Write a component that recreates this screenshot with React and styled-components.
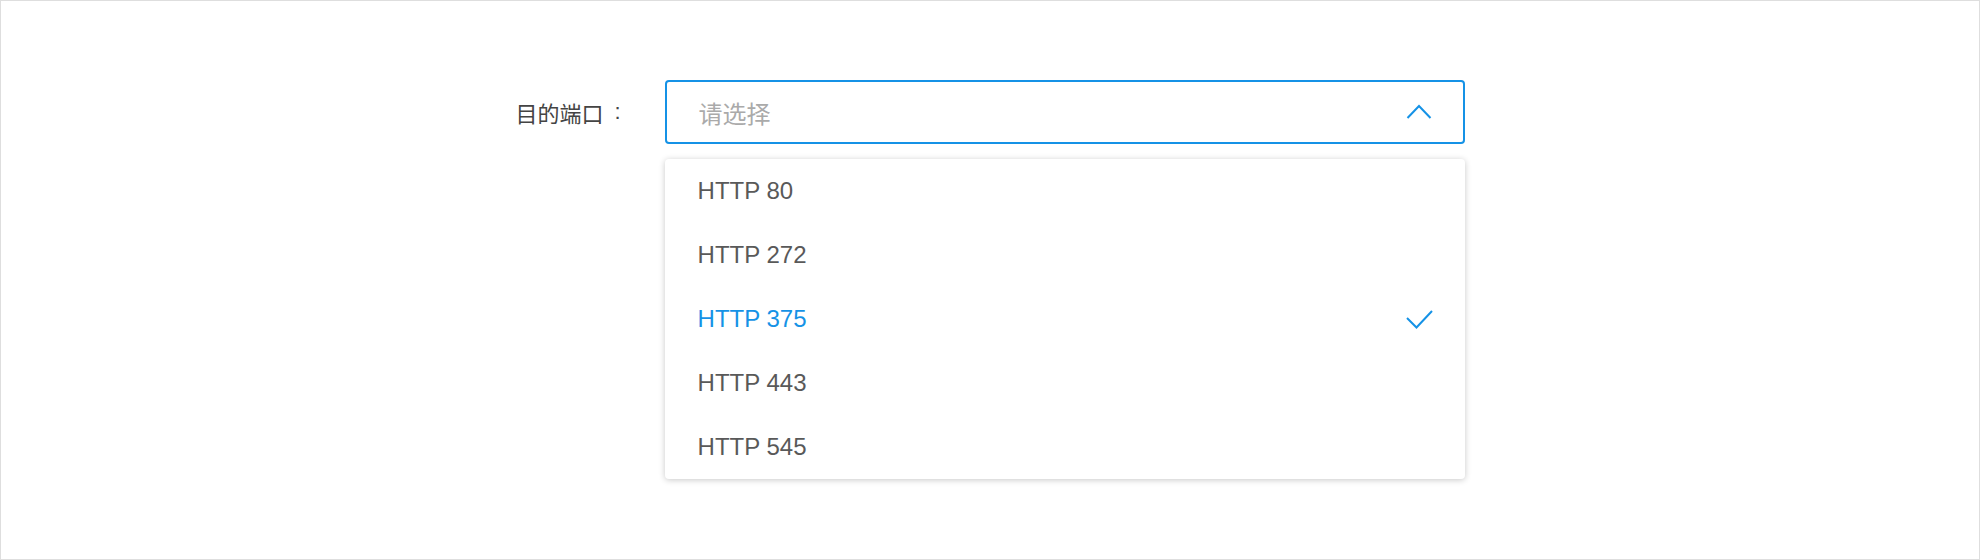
import React from "react";
import styled, { createGlobalStyle } from "styled-components";

const Global = createGlobalStyle`
  html, body { margin: 0; padding: 0; background: #fff; }
  body { font-family: "Liberation Sans", "Noto Sans CJK SC", sans-serif; }
  * { box-sizing: border-box; }
`;

const Frame = styled.div`
  width: 1980px;
  height: 560px;
  border: 1px solid #dedede;
  display: flex;
  justify-content: center;
  padding-top: 79px;
`;

const Row = styled.div`
  display: flex;
  align-items: center;
  gap: 44px;
  height: 64px;
`;

const Label = styled.label`
  display: flex;
  align-items: center;
  font-family: "Noto Sans CJK SC", sans-serif;
  font-size: 22px;
  color: #444;
  white-space: nowrap;
`;

const Colon = styled.span`
  font-family: "Liberation Sans", sans-serif;
  margin-left: 11px;
`;

const SelectWrap = styled.div`
  position: relative;
  width: 800px;
`;

const Trigger = styled.div`
  height: 64px;
  border: 2px solid #1592e6;
  border-radius: 4px;
  display: flex;
  align-items: center;
  justify-content: space-between;
  padding: 0 31px 0 32px;
`;

const Placeholder = styled.span`
  font-family: "Noto Sans CJK SC", sans-serif;
  font-size: 24px;
  color: #aaa;
`;

const Menu = styled.ul`
  position: absolute;
  top: 79px;
  left: 0;
  width: 800px;
  margin: 0;
  padding: 0;
  list-style: none;
  background: #fff;
  border-radius: 4px;
  box-shadow: 0 1px 6px rgba(0, 0, 0, 0.22);
`;

const Item = styled.li`
  height: 64px;
  display: flex;
  align-items: center;
  justify-content: space-between;
  padding: 0 32px 0 33px;
  font-size: 24px;
  color: ${(p) => (p.$active ? "#1592e6" : "#595959")};
`;

const Chevron = () => (
  <svg width="26" height="16" viewBox="0 0 26 16">
    <polyline points="1.5,14 13,2 24.5,14" fill="none" stroke="#1592e6" strokeWidth="2" />
  </svg>
);

const Check = () => (
  <svg width="27" height="19" viewBox="0 0 27 19">
    <polyline points="1,8 10.5,17.5 26,1" fill="none" stroke="#1592e6" strokeWidth="2" />
  </svg>
);

const options = ["HTTP 80", "HTTP 272", "HTTP 375", "HTTP 443", "HTTP 545"];

export default function App() {
  const selected = "HTTP 375";
  return (
    <>
      <Global />
      <Frame>
        <Row>
          <Label>
            目的端口<Colon>:</Colon>
          </Label>
          <SelectWrap>
            <Trigger>
              <Placeholder>请选择</Placeholder>
              <Chevron />
            </Trigger>
            <Menu>
              {options.map((o) => (
                <Item key={o} $active={o === selected}>
                  <span>{o}</span>
                  {o === selected && <Check />}
                </Item>
              ))}
            </Menu>
          </SelectWrap>
        </Row>
      </Frame>
    </>
  );
}
